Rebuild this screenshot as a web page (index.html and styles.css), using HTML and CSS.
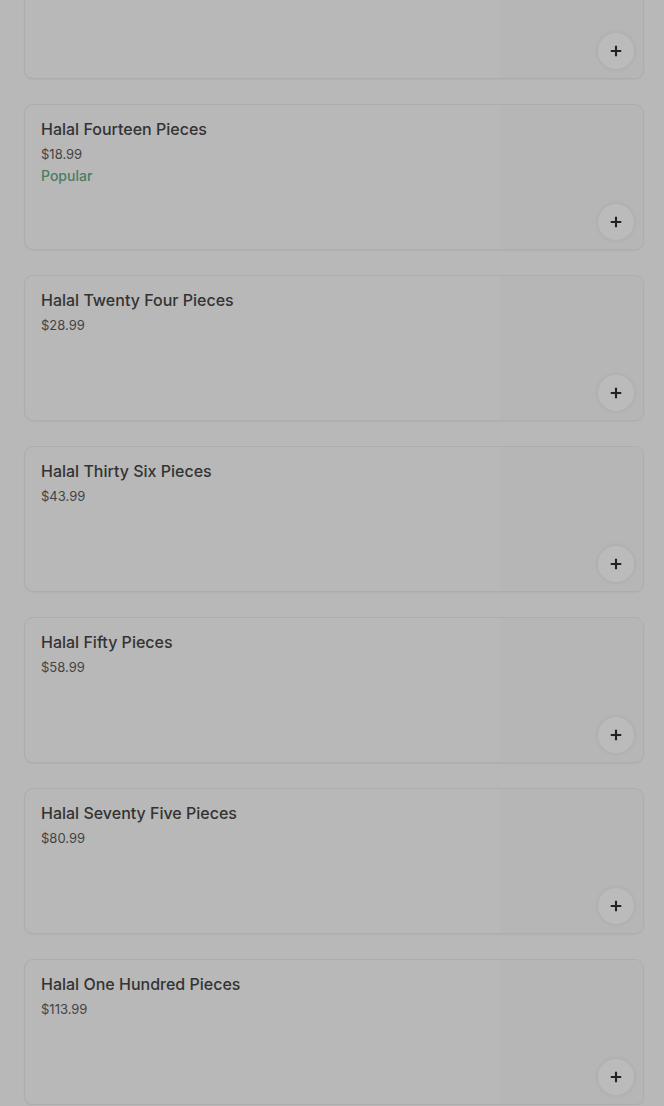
FILE: index.html
```html
<!DOCTYPE html>
<html lang="en">
<head>
    <meta charset="UTF-8">
    <meta name="viewport" content="width=device-width, initial-scale=1.0">
    <title>Menu</title>
    <link rel="stylesheet" href="styles.css">
</head>
<body>
    <div class="menu-list">
        <div class="item">
            <div class="item-info"></div>
            <div class="item-thumb"><button class="add-btn"><svg viewBox="0 0 16 16" width="14" height="14"><path d="M8 2v12M2 8h12" stroke="#222" stroke-width="2.4"/></svg></button></div>
        </div>
        <div class="item">
            <div class="item-info">
                <div class="item-title">Halal Fourteen Pieces</div>
                <div class="item-price">$18.99</div>
                <div class="item-tag">Popular</div>
            </div>
            <div class="item-thumb"><button class="add-btn"><svg viewBox="0 0 16 16" width="14" height="14"><path d="M8 2v12M2 8h12" stroke="#222" stroke-width="2.4"/></svg></button></div>
        </div>
        <div class="item">
            <div class="item-info">
                <div class="item-title">Halal Twenty Four Pieces</div>
                <div class="item-price">$28.99</div>
            </div>
            <div class="item-thumb"><button class="add-btn"><svg viewBox="0 0 16 16" width="14" height="14"><path d="M8 2v12M2 8h12" stroke="#222" stroke-width="2.4"/></svg></button></div>
        </div>
        <div class="item">
            <div class="item-info">
                <div class="item-title">Halal Thirty Six Pieces</div>
                <div class="item-price">$43.99</div>
            </div>
            <div class="item-thumb"><button class="add-btn"><svg viewBox="0 0 16 16" width="14" height="14"><path d="M8 2v12M2 8h12" stroke="#222" stroke-width="2.4"/></svg></button></div>
        </div>
        <div class="item">
            <div class="item-info">
                <div class="item-title">Halal Fifty Pieces</div>
                <div class="item-price">$58.99</div>
            </div>
            <div class="item-thumb"><button class="add-btn"><svg viewBox="0 0 16 16" width="14" height="14"><path d="M8 2v12M2 8h12" stroke="#222" stroke-width="2.4"/></svg></button></div>
        </div>
        <div class="item">
            <div class="item-info">
                <div class="item-title">Halal Seventy Five Pieces</div>
                <div class="item-price">$80.99</div>
            </div>
            <div class="item-thumb"><button class="add-btn"><svg viewBox="0 0 16 16" width="14" height="14"><path d="M8 2v12M2 8h12" stroke="#222" stroke-width="2.4"/></svg></button></div>
        </div>
        <div class="item">
            <div class="item-info">
                <div class="item-title">Halal One Hundred Pieces</div>
                <div class="item-price">$113.99</div>
            </div>
            <div class="item-thumb"><button class="add-btn"><svg viewBox="0 0 16 16" width="14" height="14"><path d="M8 2v12M2 8h12" stroke="#222" stroke-width="2.4"/></svg></button></div>
        </div>
    </div>
</body>
</html>
```

FILE: styles.css
```css
body {
    margin: 0;
    background: #b8b8b8;
    font-family: Inter, "Noto Sans", sans-serif;
    overflow: hidden;
}
.menu-list {
    display: flex;
    flex-direction: column;
    gap: 25px;
    padding: 0 20px 0 24px;
    margin-top: -67px;
}
.item {
    display: flex;
    height: 146px;
    box-sizing: border-box;
    border: 1px solid #adadad;
    border-radius: 9px;
    background: #b8b8b8;
    box-shadow: 0 1px 2px rgba(0, 0, 0, 0.04);
    overflow: hidden;
}
.item-info {
    flex: 1;
    padding: 14px 16px;
}
.item-title {
    font-size: 16px;
    font-weight: 500;
    color: #333;
    line-height: 20px;
}
.item-price {
    font-size: 13px;
    color: #444;
    margin-top: 5px;
    line-height: 20px;
}
.item-tag {
    font-size: 14px;
    font-weight: 500;
    color: #4a7d62;
    line-height: 20px;
    margin-top: 2px;
}
.item-thumb {
    width: 143px;
    background: #b6b6b6;
    display: flex;
    align-items: flex-end;
    justify-content: flex-end;
    padding: 0 9px 9px 0;
    box-sizing: border-box;
}
.add-btn {
    width: 36px;
    height: 36px;
    border-radius: 50%;
    border: none;
    background: #bbbbbb;
    box-shadow: 0 0 5px rgba(0, 0, 0, 0.08);
    display: flex;
    align-items: center;
    justify-content: center;
    padding: 0;
}
```
